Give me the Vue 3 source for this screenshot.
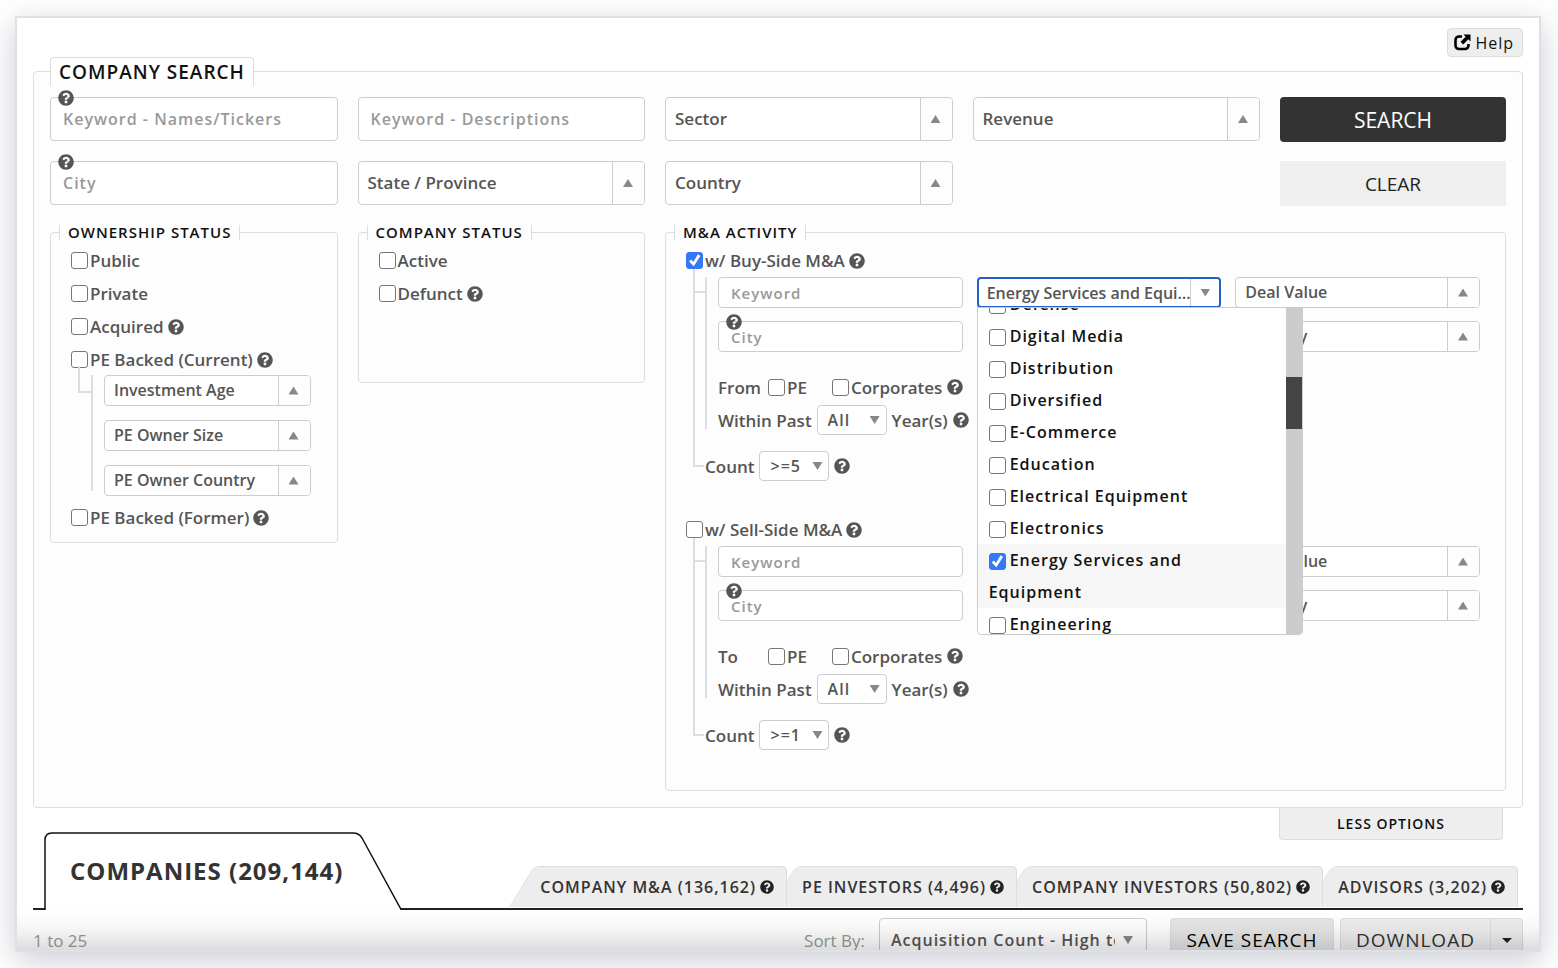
<script setup>
import { ref, onMounted } from 'vue'

const sectors = [
  { name: 'Defense', checked: false },
  { name: 'Digital Media', checked: false },
  { name: 'Distribution', checked: false },
  { name: 'Diversified', checked: false },
  { name: 'E-Commerce', checked: false },
  { name: 'Education', checked: false },
  { name: 'Electrical Equipment', checked: false },
  { name: 'Electronics', checked: false },
  { name: 'Energy Services and Equipment', checked: true },
  { name: 'Engineering', checked: false },
]

const ageFilters = ['Investment Age', 'PE Owner Size', 'PE Owner Country']

const deals = [
  { id: 'buy', title: 'w/ Buy-Side M&A', checked: true, direction: 'From', count: '>=5', open: true },
  { id: 'sell', title: 'w/ Sell-Side M&A', checked: false, direction: 'To', count: '>=1', open: false },
]

const tabs = ['COMPANY M&A (136,162)', 'PE INVESTORS (4,496)', 'COMPANY INVESTORS (50,802)', 'ADVISORS (3,202)']

const list = ref(null)
const setList = (el) => { if (el) list.value = el }

onMounted(() => {
  if (list.value) list.value.scrollTop = 20
})
</script>

<template>
  <svg class="defs" aria-hidden="true">
    <symbol id="i-help" viewBox="0 0 512 512">
      <path d="M504 256c0 136.997-111.043 248-248 248S8 392.997 8 256C8 119.083 119.043 8 256 8s248 111.083 248 248zM262.655 90c-54.497 0-89.255 22.957-116.549 63.758-3.536 5.286-2.353 12.415 2.715 16.258l34.699 26.31c5.205 3.947 12.621 3.008 16.665-2.122 17.864-22.658 30.113-35.797 57.303-35.797 20.429 0 45.698 13.148 45.698 32.958 0 14.976-12.363 22.667-32.534 33.976C247.128 238.528 216 254.941 216 296v4c0 6.627 5.373 12 12 12h56c6.627 0 12-5.373 12-12v-1.333c0-28.462 83.186-29.647 83.186-106.667 0-58.002-60.165-102-116.531-102zM256 338c-25.365 0-46 20.635-46 46 0 25.364 20.635 46 46 46s46-20.636 46-46c0-25.365-20.635-46-46-46z" />
    </symbol>
  </svg>

  <main class="card">
    <div class="top">
      <button class="help-btn" type="button">
        <svg width="17" height="17" viewBox="0 0 17 17" aria-hidden="true">
          <path d="M8 2.500H5A3.500 3.500 0 0 0 1.500 6v5.500A3.500 3.500 0 0 0 5 15h6a3.500 3.500 0 0 0 3.500-3.500V10" fill="none" stroke="#000" stroke-width="2.600" />
          <path d="M9.500 .5H16.500V7.500L14.300 5.300L9.200 10.400L6.600 7.800L11.700 2.700Z" />
        </svg>
        Help
      </button>
    </div>

    <fieldset class="panel">
      <legend class="title">COMPANY SEARCH</legend>
      <div class="grid">
        <div class="field">
          <input class="text" type="text" placeholder="Keyword - Names/Tickers" aria-label="Keyword - Names/Tickers">
          <svg class="help pin"><use href="#i-help" /></svg>
        </div>
        <div class="field">
          <input class="text" type="text" placeholder="Keyword - Descriptions" aria-label="Keyword - Descriptions">
        </div>
        <div class="field drop"><select aria-label="Sector"><option>Sector</option></select></div>
        <div class="field drop"><select aria-label="Revenue"><option>Revenue</option></select></div>
        <button class="search" type="button">SEARCH</button>

        <div class="field">
          <input class="text" type="text" placeholder="City" aria-label="City">
          <svg class="help pin"><use href="#i-help" /></svg>
        </div>
        <div class="field drop"><select aria-label="State / Province"><option>State / Province</option></select></div>
        <div class="field drop"><select aria-label="Country"><option>Country</option></select></div>
        <button class="clear" type="button">CLEAR</button>

        <fieldset class="group ownership">
          <legend>OWNERSHIP STATUS</legend>
          <div class="check"><label><input type="checkbox">Public</label></div>
          <div class="check"><label><input type="checkbox">Private</label></div>
          <div class="check"><label><input type="checkbox">Acquired</label><svg class="help"><use href="#i-help" /></svg></div>
          <div class="check"><label><input type="checkbox">PE Backed (Current)</label><svg class="help"><use href="#i-help" /></svg></div>
          <div class="branch">
            <div v-for="f in ageFilters" :key="f" class="field small drop">
              <select :aria-label="f"><option>{{ f }}</option></select>
            </div>
          </div>
          <div class="check"><label><input type="checkbox">PE Backed (Former)</label><svg class="help"><use href="#i-help" /></svg></div>
        </fieldset>

        <fieldset class="group status">
          <legend>COMPANY STATUS</legend>
          <div class="check"><label><input type="checkbox">Active</label></div>
          <div class="check"><label><input type="checkbox">Defunct</label><svg class="help"><use href="#i-help" /></svg></div>
        </fieldset>

        <fieldset class="group activity">
          <legend>M&amp;A ACTIVITY</legend>
          <section v-for="d in deals" :key="d.id" class="deal">
            <div class="check"><label><input type="checkbox" :checked="d.checked">{{ d.title }}</label><svg class="help"><use href="#i-help" /></svg></div>
            <div class="tree">
              <div class="sub">
                <div class="trio">
                  <div class="field small"><input class="text" type="text" placeholder="Keyword" aria-label="Keyword"></div>
                  <div v-if="d.open" class="field small drop open">
                    <button type="button" aria-haspopup="true" aria-expanded="true"><span>Energy Services and Equipment</span></button>
                    <div class="menu">
                      <ul :ref="setList">
                        <li v-for="s in sectors" :key="s.name" :class="{ picked: s.checked }">
                          <label><input type="checkbox" :checked="s.checked">{{ s.name }}</label>
                        </li>
                      </ul>
                      <div class="track"><div class="thumb"></div></div>
                    </div>
                  </div>
                  <div v-else class="field small drop"><select aria-label="Sector"><option>Sector</option></select></div>
                  <div class="field small drop"><select aria-label="Deal Value"><option>Deal Value</option></select></div>
                  <div class="field small">
                    <input class="text" type="text" placeholder="City" aria-label="City">
                    <svg class="help pin"><use href="#i-help" /></svg>
                  </div>
                  <div class="field small drop"><select aria-label="State"><option>State</option></select></div>
                  <div class="field small drop"><select aria-label="Country"><option>Country</option></select></div>
                </div>
                <div class="line from">
                  <span class="direction">{{ d.direction }}</span>
                  <label class="pe"><input type="checkbox">PE</label>
                  <label><input type="checkbox">Corporates</label>
                  <svg class="help"><use href="#i-help" /></svg>
                </div>
                <div class="line">
                  <label :for="d.id + '-years'">Within Past</label>
                  <span class="mini"><select :id="d.id + '-years'"><option>All</option></select></span>
                  <span>Year(s)</span>
                  <svg class="help"><use href="#i-help" /></svg>
                </div>
              </div>
              <div class="line count">
                <label :for="d.id + '-count'">Count</label>
                <span class="mini"><select :id="d.id + '-count'"><option>{{ d.count }}</option></select></span>
                <svg class="help"><use href="#i-help" /></svg>
              </div>
            </div>
          </section>
        </fieldset>
      </div>
    </fieldset>

    <div class="less-row"><button class="less" type="button">LESS OPTIONS</button></div>

    <nav class="tabs">
      <a class="main-tab" href="#companies">
        <svg width="358" height="79" viewBox="0 0 358 79" aria-hidden="true">
          <path d="M1 80V9Q1 2 8 2H309Q315 2 318 7L357 78.500V80" fill="#fff" stroke="#111" stroke-width="1.500" />
        </svg>
        <span>COMPANIES (209,144)</span>
      </a>
      <div class="side-tabs">
        <a v-for="t in tabs" :key="t" class="tab" :href="'#' + t.split(' (')[0].toLowerCase().replace(' ', '-')">
          <span>{{ t }}</span><svg class="help"><use href="#i-help" /></svg>
        </a>
      </div>
    </nav>

    <div class="bar">
      <span class="muted">1 to 25</span>
      <label class="muted sort-label" for="sort">Sort By:</label>
      <span class="mini sort"><select id="sort"><option>Acquisition Count - High to Low</option></select></span>
      <button class="save" type="button">SAVE SEARCH</button>
      <div class="split">
        <button class="download" type="button">DOWNLOAD</button>
        <button class="caret" type="button" aria-label="Download options"><svg width="10" height="5" viewBox="0 0 10 5"><path d="M0 0H10L5 5Z" fill="#222" /></svg></button>
      </div>
    </div>
  </main>
</template>

<style>
body { background: #fff; height: 100vh; overflow: hidden; }
#app { height: 100%; display: flex; }
</style>

<style scoped>
* { box-sizing: border-box; }
.defs { position: absolute; width: 0; height: 0; }
.card {
  position: relative; flex: 1; min-width: 0; margin: 16px 17px 16px 15px; padding: 10px 16px 0;
  border: 2px solid #dde1e6; background: #fff; overflow: hidden;
  box-shadow: 0 8px 30px rgba(60, 72, 96, .28);
  font-family: "Open Sans", "Liberation Sans", sans-serif; font-size: 17px; font-weight: 600; color: #555;
}
.card::after {
  content: ""; position: absolute; inset: 0; pointer-events: none;
  box-shadow: inset 0 -40px 36px -36px rgba(0, 0, 0, .24); z-index: 9;
}
button, input, select { font: inherit; color: inherit; margin: 0; }
button { cursor: pointer; }
fieldset { min-width: 0; margin: 0; }
.top { display: flex; justify-content: flex-end; }
.help-btn {
  display: flex; align-items: center; gap: 4px; height: 29px; padding: 0 8px 0 6px;
  border: 1px solid #ddd; border-radius: 4px; background: #eee; color: #111;
  font-size: 16px; font-weight: 500; letter-spacing: 1px;
}
.panel { border: 1px solid #ddd; border-radius: 4px; background: #fdfdfd; padding: 11px 16px 16px; }
.title {
  height: 29px; line-height: 29px; padding: 0 8px; border: 1px solid #ddd; border-bottom: 0;
  border-radius: 4px 4px 0 0; background: linear-gradient(#fff, #fdfdfd);
  font-size: 19px; color: #111; letter-spacing: 1px;
}
.grid {
  display: grid; grid-template-columns: repeat(4, minmax(0, 1fr)) 226px; grid-template-rows: 44px 44px auto;
  gap: 20px; align-items: start;
}
.field { position: relative; height: 44px; min-width: 0; }
.field .text { font-size: 16px; }
.small { height: 31px; font-size: 16px; }
.small .text { font-size: 15px; }
.text, .drop select, .drop button {
  width: 100%; height: 100%; border: 1px solid #ccc; border-radius: 4px; background: #fff; outline: 0; display: block;
}
.text { padding: 0 12px; letter-spacing: 1px; }
.text::placeholder { color: #999; opacity: 1; }
.drop select { appearance: none; padding: 0 42px 2px 9px; }
.drop::before {
  content: ""; position: absolute; right: 1px; top: 1px; bottom: 1px; width: 31px;
  border-left: 1px solid #ccc; border-radius: 0 3px 3px 0; background: #fdfdfd; pointer-events: none;
}
.drop::after {
  content: ""; position: absolute; right: 12px; top: calc(50% - 4px); width: 10px; height: 8px;
  background: #888; clip-path: polygon(50% 0, 100% 100%, 0 100%); pointer-events: none;
}
.open { z-index: 5; }
.open button { border: 2px solid #2460c8; padding: 0 28px 0 8px; text-align: left; }
.open button span { display: block; overflow: hidden; text-overflow: ellipsis; white-space: nowrap; }
.open::before { right: 2px; top: 2px; bottom: 2px; background: #fff; width: 28px; }
.open::after { right: 11px; clip-path: polygon(0 0, 100% 0, 50% 100%); }
.menu {
  position: absolute; left: 0; top: 30px; width: 326px; height: 328px; display: flex;
  border: 1px solid #ccc; border-radius: 0 0 4px 4px; background: #fff; overflow: hidden;
}
.menu ul { flex: 1; margin: 0; padding: 0; list-style: none; overflow-y: scroll; scrollbar-width: none; }
.menu li { padding: 0 11px; line-height: 32px; color: #111; letter-spacing: 1px; }
.menu li.picked { background: #f6f6f6; }
.menu li input { margin-right: 4px; vertical-align: -4px; }
.track { width: 16px; padding-top: 69px; background: #ccc; }
.thumb { height: 52px; background: #444; }

input[type="checkbox"] {
  appearance: none; flex: none; width: 17px; height: 17px; border: 1px solid #767676; border-radius: 3px; background: #fff;
}
input[type="checkbox"]:checked { border-color: #3478f6; background: #3478f6; }
input[type="checkbox"]:checked::before {
  content: ""; display: block; height: 100%; background: #fff;
  clip-path: polygon(14% 56%, 28% 43%, 42% 60%, 73% 9%, 89% 20%, 45% 89%);
}
.help { width: 16px; height: 16px; flex: none; fill: #555; }
.pin { position: absolute; left: 8px; top: -7px; }
.group { border: 1px solid #ddd; border-radius: 4px; padding: 4px 8px 8px; grid-row: 3; }
.group legend {
  height: 15px; line-height: 15px; padding: 0 8px; border: solid #ddd; border-width: 0 1px;
  font-size: 15px; color: #111; letter-spacing: 1px;
}
.check { display: flex; align-items: center; gap: 4px; height: 33px; padding-left: 12px; }
.check label, .line label { display: flex; align-items: center; gap: 2px; }
.ownership { grid-column: 1; }
.status { grid-column: 2; min-height: 158px; }
.activity { grid-column: 3 / 6; padding-bottom: 40px; }
.clear { grid-column: 5; }

.branch {
  position: relative; display: grid; gap: 14px; margin: -1px 18px 5px 32px; padding-left: 13px;
}
.branch::before {
  content: ""; position: absolute; left: 0; top: 0; bottom: 5px; width: 2px; background: #ddd;
}
.branch::after {
  content: ""; position: absolute; left: -13px; top: -9px; width: 13px; height: 25px; border: solid #ddd; border-width: 0 0 2px 2px;
}
.deal + .deal { margin-top: 32px; }
.tree { position: relative; padding-left: 31px; }
.tree::before {
  content: ""; position: absolute; left: 19px; top: -8px; bottom: 14px; width: 9px; border: solid #ddd; border-width: 0 0 2px 2px;
}
.sub { position: relative; margin-right: 17px; padding-left: 13px; }
.sub::before { content: ""; position: absolute; left: 0; top: 0; bottom: 6px; width: 2px; background: #ddd; }
.sub::after { content: ""; position: absolute; left: -10px; top: 14px; width: 10px; height: 2px; background: #ddd; }
.trio { display: grid; grid-template-columns: repeat(3, minmax(0, 1fr)); gap: 13px 14px; }
.line { display: flex; align-items: center; gap: 5px; height: 30px; }
.from { margin: 20px 0 3px; }
.direction { width: 45px; }
.pe { margin-right: 20px; }
.count { margin-top: 16px; }
.mini { position: relative; display: block; height: 30px; }
.mini select {
  appearance: none; height: 100%; width: 70px; padding: 0 24px 0 10px; border: 1px solid #ccc; border-radius: 4px;
  background: #fff; outline: 0; font-size: 16px; letter-spacing: 1px;
}
.mini::after {
  content: ""; position: absolute; right: 7px; top: calc(50% - 4px); width: 10px; height: 8px;
  background: #888; clip-path: polygon(0 0, 100% 0, 50% 100%); pointer-events: none;
}

.search, .clear { height: 45px; border: 0; font-weight: 400; }
.search { border-radius: 4px; background: #333; color: #fff; font-size: 21px; }
.clear { background: #efefef; color: #222; font-size: 19px; }

.less-row { display: flex; justify-content: flex-end; padding-right: 20px; }
.less {
  width: 224px; height: 32px; border: 1px solid #ddd; border-top: 0; border-radius: 0 0 4px 4px;
  background: #eee; color: #111; font-size: 14px; letter-spacing: 1px;
}
.tabs {
  position: relative; display: flex; justify-content: space-between; align-items: flex-end; height: 70px;
  padding: 0 5px 0 11px; border-bottom: 2px solid #222;
}
.main-tab {
  position: relative; display: flex; align-items: center; width: 358px; height: 79px; margin-bottom: -2px; padding-left: 26px;
  color: #333; text-decoration: none; font-size: 24px; font-weight: 700; letter-spacing: 1px;
}
.main-tab svg { position: absolute; left: 0; top: 0; }
.main-tab span { position: relative; }
.side-tabs { display: flex; height: 41px; margin-bottom: 1px; }
.tab {
  position: relative; display: flex; align-items: center; gap: 4px; padding: 0 13px 0 15px;
  color: #333; text-decoration: none; font-size: 16px; letter-spacing: 1px; white-space: nowrap;
}
.tab:nth-child(1) { z-index: 4; }
.tab:nth-child(2) { z-index: 3; }
.tab:nth-child(3) { z-index: 2; }
.tab:nth-child(4) { z-index: 1; }
.tab::before, .tab::after { content: ""; position: absolute; top: 0; bottom: 0; background: #ededed; border: 1px solid #ddd; border-bottom: 0; }
.tab::before { left: -16px; width: 70px; border-right: 0; border-radius: 6px 0 0 0; transform: skewX(-31deg); transform-origin: 0 100%; }
.tab::after { left: 30px; right: 0; border-left: 0; border-radius: 0 5px 0 0; }
.tab span, .tab .help { position: relative; z-index: 1; }
.tab .help { fill: #222; width: 14px; height: 14px; }

.bar { display: flex; align-items: center; height: 44px; margin-top: 8px; }
.muted { font-weight: 400; color: #999; }
.sort-label { margin-left: auto; margin-right: 14px; }
.sort { height: 44px; margin-right: 23px; }
.sort select { width: 268px; padding: 0 31px 0 11px; }
.sort::after { right: 14px; }
.save, .download, .caret {
  height: 44px; padding: 0; border: 1px solid #ddd; background: #eee; color: #333;
  font-size: 19px; font-weight: 400; letter-spacing: 1px;
}
.save { width: 164px; margin-right: 6px; border-radius: 4px; color: #000; background: #e6e6e6; }
.split { display: flex; }
.download { width: 150px; border-radius: 4px 0 0 4px; border-right: 0; }
.caret { width: 33px; display: flex; align-items: center; justify-content: center; border-radius: 0 4px 4px 0; }
</style>
